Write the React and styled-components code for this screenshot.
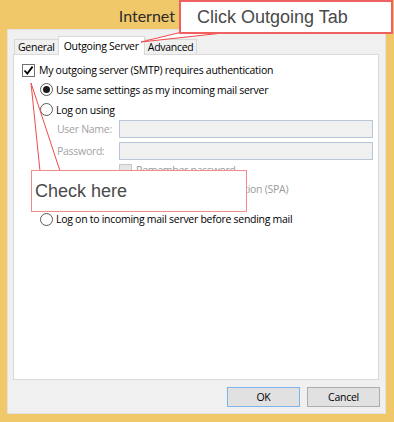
import React from "react";
import styled, { createGlobalStyle } from "styled-components";

const Global = createGlobalStyle`
  html, body { margin: 0; padding: 0; background: #f0c86a; }
  body { font-family: "Open Sans", "Noto Sans", sans-serif; }
`;

const Window = styled.div`
  position: relative;
  width: 394px;
  height: 422px;
  background: #f0c86a;
  display: flex;
  flex-direction: column;
  box-sizing: border-box;
  overflow: hidden;
`;

const TitleBar = styled.div`
  height: 29px;
  display: flex;
  align-items: center;
  justify-content: center;
  font-family: Lato, sans-serif;
  font-size: 16px;
  color: #2b2b2b;
  padding: 1px 0 0 8px;
  box-sizing: border-box;
`;

const Client = styled.div`
  flex: 1;
  margin: 0 8px 8px 7px;
  background: #f0f0f0;
  border: 1px solid #e2e2e2;
  padding: 6px 6px 0 5px;
  display: flex;
  flex-direction: column;
  font-family: "Open Sans", sans-serif;
  font-size: 10.5px;
  letter-spacing: -0.28px;
  color: #000;
`;

const TabStrip = styled.div`
  display: flex;
  align-items: flex-end;
  height: 19px;
  padding-left: 1px;
  position: relative;
  z-index: 1;
`;

const Tab = styled.div`
  height: ${p => (p.active ? "19px" : "16px")};
  padding: 0 ${p => (p.active ? "5px" : "3px")};
  margin: 0 ${p => (p.active ? "-1px" : "0")};
  background: ${p => (p.active ? "#fff" : "#f0f0f0")};
  border: 1px solid #d9d9d9;
  border-bottom: ${p => (p.active ? "none" : "1px solid #d9d9d9")};
  display: flex;
  align-items: center;
  box-sizing: border-box;
  white-space: nowrap;
  position: relative;
  z-index: ${p => (p.active ? 2 : 0)};
`;

const Pane = styled.div`
  height: 326px;
  background: #fff;
  border: 1px solid #d9d9d9;
  margin-top: -1px;
  width: 366px;
  box-sizing: border-box;
  padding: 6px 0 0 8px;
  display: flex;
  flex-direction: column;
`;

const Row = styled.div`
  display: flex;
  align-items: center;
  height: ${p => p.h || 20}px;
  padding-left: ${p => p.indent || 0}px;
  color: ${p => (p.disabled ? "#9a9a9a" : "#000")};
  white-space: nowrap;
`;

const Box = styled.span`
  width: 13px;
  height: 13px;
  box-sizing: border-box;
  border: 1px solid ${p => (p.disabled ? "#c8c8c8" : "#707070")};
  background: ${p => (p.disabled ? "#e6e6e6" : "#fff")};
  display: inline-flex;
  align-items: center;
  justify-content: center;
  margin-right: 4px;
  flex-shrink: 0;
`;

const Radio = styled.span`
  width: 13px;
  height: 13px;
  box-sizing: border-box;
  border-radius: 50%;
  border: 1px solid #5a5a5a;
  background: #fff;
  display: inline-flex;
  align-items: center;
  justify-content: center;
  margin-right: 3px;
  flex-shrink: 0;
  &::after {
    content: "";
    width: 7px;
    height: 7px;
    border-radius: 50%;
    background: ${p => (p.checked ? "#1a1a1a" : "transparent")};
  }
`;

const Label = styled.span`
  width: 62px;
  color: #a3a3a3;
`;

const Input = styled.div`
  width: 254px;
  height: 18px;
  box-sizing: border-box;
  border: 1px solid #b9c6d8;
  background: #f0f0f0;
`;

const Footer = styled.div`
  flex: 1;
  display: flex;
  justify-content: flex-end;
  align-items: flex-start;
  gap: 7px;
  padding: 7px 0 0 0;
  margin-right: -1px;
`;

const Button = styled.div`
  width: 73px;
  height: 20px;
  box-sizing: border-box;
  border: 1px solid ${p => (p.primary ? "#7eb4ea" : "#adadad")};
  background: #e1e1e1;
  display: flex;
  align-items: center;
  justify-content: center;
`;

const Callout = styled.div`
  position: absolute;
  left: ${p => p.x}px;
  top: ${p => p.y}px;
  width: ${p => p.w}px;
  height: ${p => p.h}px;
  box-sizing: border-box;
  background: #fff;
  border: ${p => p.bw || 1.5}px solid ${p => p.color};
  font-family: "Liberation Sans", Arial, sans-serif;
  font-size: 18px;
  color: #4a4a4a;
  display: flex;
  align-items: center;
  padding-left: ${p => p.pad}px;
  z-index: 5;
`;

const Pointers = styled.svg`
  position: absolute;
  left: 0;
  top: 0;
  width: 394px;
  height: 422px;
  pointer-events: none;
  z-index: 4;
`;

const Check = () => (
  <svg width="11" height="11" viewBox="0 0 11 11">
    <path d="M1.5 5.5 L4.3 8.6 L9.6 1.6" fill="none" stroke="#000" strokeWidth="1.8" />
  </svg>
);

export default () => {
  return (
    <>
      <Global />
      <Window>
        <TitleBar>Internet E-mail Settings</TitleBar>
        <Client>
          <TabStrip>
            <Tab>General</Tab>
            <Tab active>Outgoing Server</Tab>
            <Tab>Advanced</Tab>
          </TabStrip>
          <Pane>
            <Row h={18}>
              <Box><Check /></Box>
              My outgoing server (SMTP) requires authentication
            </Row>
            <Row h={21} indent={18}>
              <Radio checked />
              Use same settings as my incoming mail server
            </Row>
            <Row h={19} indent={18}>
              <Radio />
              Log on using
            </Row>
            <Row h={20} indent={35}>
              <Label>User Name:</Label>
              <Input />
            </Row>
            <Row h={24} indent={35}>
              <Label>Password:</Label>
              <Input />
            </Row>
            <Row h={14} indent={97} disabled>
              <Box disabled />
              Remember password
            </Row>
            <Row h={24} indent={35} disabled>
              <Box disabled />
              Require Secure Password Authentication (SPA)
            </Row>
            <Row h={36} indent={18}>
              <Radio />
              Log on to incoming mail server before sending mail
            </Row>
          </Pane>
          <Footer>
            <Button primary>OK</Button>
            <Button>Cancel</Button>
          </Footer>
        </Client>

        <Pointers viewBox="0 0 394 422">
          <polygon points="141,42 182,32 232,32" fill="#fff" stroke="#f04a4a" strokeWidth="1" />
          <polygon points="31,83 40,171 60,171" fill="#fff" stroke="#f04a4a" strokeWidth="1" />
        </Pointers>
        <Callout x={179} y={0} w={214} h={34} color="#f06060" pad={16} bw={2}>
          Click Outgoing Tab
        </Callout>
        <Callout x={31} y={170} w={216} h={42} color="#f08c8c" pad={3}>
          Check here
        </Callout>
      </Window>
    </>
  );
};
